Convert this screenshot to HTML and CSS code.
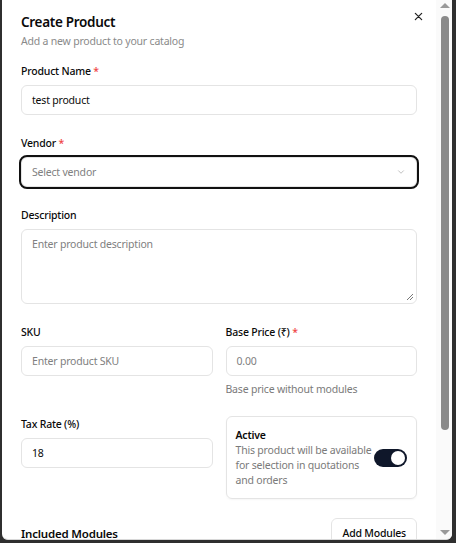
FILE: index.html
```html
<!DOCTYPE html>
<html>
<head>
<meta charset="utf-8">
<link rel="stylesheet" href="styles.css">
</head>
<body>
<div class="dialog">
  <div class="content">
    <div class="header">
      <h2 class="title">Create Product</h2>
      <p class="subtitle">Add a new product to your catalog</p>
    </div>

    <div class="field">
      <label class="label">Product Name <span class="req">*</span></label>
      <div class="input"><span class="value">test product</span></div>
    </div>

    <div class="field">
      <label class="label">Vendor <span class="req">*</span></label>
      <div class="select">
        <span class="placeholder">Select vendor</span>
        <svg class="chev" width="10" height="10" viewBox="0 0 24 24" fill="none" stroke="#b5b5b5" stroke-width="2" stroke-linecap="round" stroke-linejoin="round"><path d="M6 9l6 6 6-6"/></svg>
      </div>
    </div>

    <div class="field">
      <label class="label">Description</label>
      <div class="textarea">
        <span class="placeholder">Enter product description</span>
        <svg class="grip" width="8" height="8" viewBox="0 0 8 8" stroke="#555" stroke-width="0.8"><path d="M1 7L7 1M4 7L7 4"/></svg>
      </div>
    </div>

    <div class="grid">
      <div class="field">
        <label class="label">SKU</label>
        <div class="input"><span class="placeholder">Enter product SKU</span></div>
      </div>
      <div class="field">
        <label class="label">Base Price (₹) <span class="req">*</span></label>
        <div class="input"><span class="placeholder">0.00</span></div>
        <p class="help">Base price without modules</p>
      </div>
      <div class="field">
        <label class="label">Tax Rate (%)</label>
        <div class="input"><span class="value">18</span></div>
      </div>
      <div class="card">
        <div class="card-text">
          <div class="card-title">Active</div>
          <div class="card-desc">This product will be available for selection in quotations and orders</div>
        </div>
        <div class="switch"><span class="knob"></span></div>
      </div>
    </div>

    <div class="modules">
      <h3 class="modules-title">Included Modules</h3>
      <button class="btn">Add Modules</button>
    </div>
  </div>

  <button class="close" aria-label="Close">
    <svg width="9" height="9" viewBox="0 0 10 10" stroke="#222" stroke-width="1.4" stroke-linecap="round"><path d="M1.5 1.5l7 7M8.5 1.5l-7 7"/></svg>
  </button>

  <div class="scrollbar">
    <span class="arrow up"></span>
    <span class="thumb"></span>
    <span class="arrow down"></span>
  </div>
</div>
</body>
</html>
```

FILE: styles.css
```css
* { box-sizing: border-box; }
html, body { margin: 0; padding: 0; }
body {
  background: #2f2f2f;
  width: 456px;
  height: 543px;
  overflow: hidden;
  font-family: "Noto Sans", "Open Sans", sans-serif;
  letter-spacing: -0.2px;
  color: #0a0a0a;
}
.dialog {
  position: relative;
  margin-left: 2px;
  width: 450px;
  height: 540px;
  background: #fff;
  border-bottom: 1px solid #d8d8d8;
  border-radius: 0 0 6px 6px;
  overflow: hidden;
}
.content {
  width: 434px;
  padding: 12px 19px 0 19px;
}
.header { margin-bottom: 14px; }
.title {
  margin: 0;
  font-size: 13.5px;
  line-height: 20px;
  font-weight: 600;
  letter-spacing: -0.3px;
  color: #0a0a0a;
}
.subtitle {
  margin: 1px 0 0;
  font-size: 10.5px;
  line-height: 16px;
  color: #8a8a8a;
}
.field { display: flex; flex-direction: column; margin-bottom: 20px; }
.grid .field { margin-bottom: 0; }
.label {
  font-size: 10.5px;
  line-height: 16px;
  font-weight: 500;
  margin-bottom: 6px;
}
.req { color: #ef4444; }
.input, .select, .textarea {
  height: 30px;
  border: 1px solid #e4e4e4;
  border-radius: 6px;
  display: flex;
  align-items: center;
  padding: 0 10px;
  font-size: 10.5px;
}
.value { color: #0a0a0a; }
.placeholder { color: #808080; }
.select {
  justify-content: space-between;
  outline: 2px solid #111;
  outline-offset: 0px;
  box-shadow: 0 0 0 1px #fff inset;
}
.chev { margin-right: 0; }
.textarea {
  position: relative;
  height: 75px;
  align-items: flex-start;
  padding-top: 7px;
}
.grip { position: absolute; right: 2px; bottom: 2px; }
.grid {
  display: grid;
  grid-template-columns: 1fr 1fr;
  column-gap: 13px;
  row-gap: 20px;
  margin-bottom: 19px;
}
.help {
  margin: 6px 0 0;
  font-size: 10.5px;
  line-height: 14px;
  color: #7a7a7a;
}
.card {
  border: 1px solid #e4e4e4;
  border-radius: 6px;
  padding: 10px 9px;
  display: flex;
  align-items: center;
  gap: 2px;
  box-shadow: 0 1px 2px rgba(0,0,0,0.04);
}
.card-text { flex: 1; }
.card-title { font-size: 10.5px; line-height: 16px; font-weight: 600; }
.card-desc { font-size: 10.5px; line-height: 15px; color: #7a7a7a; }
.switch {
  width: 33px;
  height: 18px;
  border-radius: 9px;
  background: #0f172a;
  position: relative;
  flex-shrink: 0;
}
.knob {
  position: absolute;
  right: 2px;
  top: 2px;
  width: 14px;
  height: 14px;
  border-radius: 50%;
  background: #fff;
}
.modules {
  display: flex;
  justify-content: space-between;
  align-items: center;
}
.modules-title {
  margin: 0;
  font-size: 11.5px;
  font-weight: 600;
}
.btn {
  height: 30px;
  padding: 0 10px;
  border: 1px solid #e4e4e4;
  border-radius: 6px;
  background: #fff;
  font-family: inherit;
  letter-spacing: inherit;
  font-size: 10.5px;
  font-weight: 500;
  color: #0a0a0a;
}
.close {
  position: absolute;
  top: 11px;
  left: 411px;
  width: 11px;
  height: 11px;
  padding: 0;
  border: 0;
  background: none;
  display: flex;
  align-items: center;
  justify-content: center;
}
.scrollbar {
  position: absolute;
  top: 0;
  right: 0;
  width: 16px;
  height: 540px;
  background: #fafafa;
}
.thumb {
  position: absolute;
  left: 5px;
  top: 16px;
  width: 8px;
  height: 414px;
  border-radius: 4px;
  background: #8a8a8a;
}
.arrow {
  position: absolute;
  left: 4px;
  width: 0;
  height: 0;
  border-left: 5px solid transparent;
  border-right: 5px solid transparent;
}
.arrow.up { top: 3px; border-bottom: 5px solid #999; }
.arrow.down { top: 530px; border-top: 5px solid #999; }
```
